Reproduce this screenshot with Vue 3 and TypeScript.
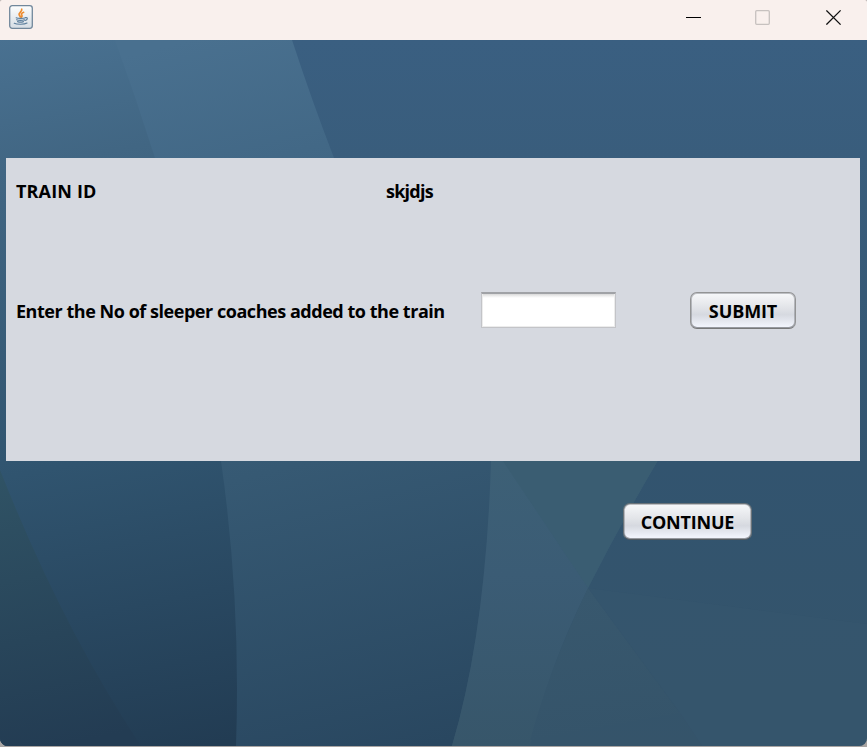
<script setup lang="ts">
import { ref } from 'vue'

const trainId = ref<string>('skjdjs')
const coaches = ref<string>('')
</script>

<template>
  <div class="window">
    <header class="titlebar">
      <svg class="java" width="24" height="24" viewBox="0 0 24 24">
        <defs>
          <linearGradient id="tile" x1="0" y1="0" x2="0" y2="1">
            <stop offset="0" stop-color="#fdfdfd" />
            <stop offset="1" stop-color="#d5dde4" />
          </linearGradient>
        </defs>
        <rect x=".7" y=".7" width="22.6" height="22.6" rx="2.5" fill="url(#tile)" stroke="#71879b" stroke-width="1.3" />
        <g fill="none" stroke-linecap="round">
          <path d="M12.7 4.2c1 2.3-3.5 3.3-2.6 5.6.3.8 1 1.300 1.300 2M14.600 7.300c-2.200 1-2.700 1.900-1.700 3 .5.700.2 1.200-.5 1.800" stroke="#ee8b2d" stroke-width="1.700" />
          <path d="M7.200 12.800c1.400.9 7.600.8 9.300-.1M7.700 14.700c1.500.8 6 .8 7.600 0M8.600 16.600c1.400.6 4.400.6 5.800 0M5.300 18.300c2.400 1.300 10.300 1.300 12.700-.2M16.400 12.600c2.700-.6 2.400 2.200-.3 2.900" stroke="#5d7f9d" stroke-width="1.200" />
        </g>
      </svg>
      <svg class="ctl" width="16" height="16" viewBox="0 0 16 16"><path d="M0 8.500h15" stroke="#000" /></svg>
      <svg class="ctl" width="16" height="16" viewBox="0 0 16 16"><rect x=".7" y="1.700" width="13.600" height="13.600" rx="1" fill="none" stroke="#c7c1bf" stroke-width="1.300" /></svg>
      <svg class="ctl" width="16" height="16" viewBox="0 0 16 16"><path d="M.4 1.400l14.200 14.200M14.600 1.400L.4 15.600" stroke="#111" stroke-width="1.300" /></svg>
    </header>

    <main class="client">
      <svg class="backdrop" width="867" height="706" viewBox="0 40 867 706" preserveAspectRatio="none">
        <defs>
          <linearGradient id="base" gradientUnits="userSpaceOnUse" x1="600" y1="40" x2="600" y2="746">
            <stop offset="0" stop-color="#3a5f81" />
            <stop offset=".17" stop-color="#395d7c" />
            <stop offset=".6" stop-color="#32546f" />
            <stop offset="1" stop-color="#35546a" />
          </linearGradient>
          <linearGradient id="mid" gradientUnits="userSpaceOnUse" x1="230" y1="30" x2="410" y2="750">
            <stop offset="0" stop-color="#49708f" />
            <stop offset=".18" stop-color="#426886" />
            <stop offset=".59" stop-color="#365973" />
            <stop offset="1" stop-color="#294760" />
          </linearGradient>
          <linearGradient id="left" gradientUnits="userSpaceOnUse" x1="40" y1="30" x2="180" y2="750">
            <stop offset="0" stop-color="#497191" />
            <stop offset=".18" stop-color="#416683" />
            <stop offset=".59" stop-color="#30546f" />
            <stop offset="1" stop-color="#223c53" />
          </linearGradient>
          <linearGradient id="corner" gradientUnits="userSpaceOnUse" x1="0" y1="470" x2="60" y2="746">
            <stop offset="0" stop-color="#305365" />
            <stop offset="1" stop-color="#233c53" />
          </linearGradient>
          <linearGradient id="blade" gradientUnits="userSpaceOnUse" x1="0" y1="461" x2="0" y2="746">
            <stop offset="0" stop-color="#3d6076" />
            <stop offset=".4" stop-color="#3b5c75" />
            <stop offset="1" stop-color="#37566a" />
          </linearGradient>
          <linearGradient id="facet" gradientUnits="userSpaceOnUse" x1="600" y1="588" x2="615" y2="735">
            <stop offset="0" stop-color="#38586e" />
            <stop offset="1" stop-color="#35546a" />
          </linearGradient>
        </defs>
        <rect x="0" y="40" width="867" height="706" fill="url(#base)" />
        <path d="M0 40H292Q312 101 334 158L491 461Q486 632 452 746H0Z" fill="url(#mid)" />
        <path d="M0 40H115Q136 98 155 158Q194 294 221 461Q241 600 236 746H0Z" fill="url(#left)" />
        <path d="M0 470Q62 627 141 746H0Z" fill="url(#corner)" />
        <path d="M491 450L664 450Q624 517 588 588Q547 671 530 746H452Q486 632 491 461Z" fill="url(#blade)" />
        <path d="M496 450H664Q624 517 588 588L503 461Z" fill="#3a5d72" />
        <path d="M588 588L680 713L530 740Q551 665 588 588Z" fill="url(#facet)" />
        <path d="M588 588L867 624V746H702L680 713Z" fill="#35556d" fill-opacity=".5" />
      </svg>

      <div class="content">
        <form class="panel" @submit.prevent>
          <div class="row first">
            <span class="label id">TRAIN ID</span>
            <span class="label value">{{ trainId }}</span>
          </div>
          <div class="row second">
            <label class="label prompt" for="coaches">Enter the No of sleeper coaches added to the train</label>
            <input id="coaches" v-model="coaches" class="field" type="text" />
            <button class="btn submit" type="submit"><span>SUBMIT</span></button>
          </div>
        </form>
        <button class="btn continue" type="button"><span>CONTINUE</span></button>
      </div>
    </main>
  </div>
</template>

<style>
body {
  margin: 0;
  background: #a9a5a3;
}
</style>

<style scoped>
.window {
  width: 867px;
  height: 746px;
  box-sizing: border-box;
  overflow: hidden;
  border-radius: 2px 2px 8px 8px;
  font-family: 'Open Sans', 'Noto Sans', sans-serif;
}
.titlebar {
  display: flex;
  box-sizing: border-box;
  height: 40px;
  padding: 5px 25px 0 9px;
  background: #f9f0ed;
}
.java {
  margin-right: auto;
}
.ctl {
  margin: 4px 0 0 54px;
}
.ctl + .ctl {
  margin-left: 53px;
}
.ctl + .ctl + .ctl {
  margin-left: 55px;
}
.client {
  display: grid;
  height: 706px;
}
.backdrop,
.content {
  grid-area: 1 / 1;
}
.content {
  z-index: 1;
  display: flex;
  flex-direction: column;
  padding: 118px 7px 0 6px;
}
.panel {
  box-sizing: border-box;
  height: 303px;
  padding: 14px 10px 0;
  background: #d6d9e0;
}
.row {
  display: flex;
  align-items: center;
  height: 37px;
}
.second {
  margin-top: 83px;
}
.label {
  color: #000;
  font-size: 18px;
  font-weight: 700;
  line-height: 24px;
  white-space: nowrap;
}
.id {
  width: 370px;
  letter-spacing: 0.15px;
}
.value {
  letter-spacing: -0.75px;
}
.prompt {
  width: 465px;
  letter-spacing: -0.46px;
}
.field {
  box-sizing: border-box;
  align-self: flex-start;
  width: 135px;
  height: 36px;
  padding: 4px 8px;
  border: 1px solid #c3c4c8;
  border-top: 2px solid #a0a2a6;
  border-radius: 0;
  background: linear-gradient(#d8d8d8, #eee 2px, #fff 4px);
  box-shadow: inset 1px 0 #ececec, inset -1px -1px #ececec;
  font: 600 18px 'Open Sans', sans-serif;
  outline: none;
}
.btn {
  box-sizing: border-box;
  height: 37px;
  padding: 0;
  border: 1px solid rgba(125, 125, 125, 0.75);
  border-bottom-color: rgba(95, 95, 95, 0.8);
  border-radius: 7px;
  background: linear-gradient(#f7f8fa, #e3e5e9 40%, #d6d9e0 62%, #f0f3fb 94%) padding-box;
  box-shadow: inset 0 0 0 1px rgba(120, 122, 128, 0.45), inset 0 -1px rgba(80, 82, 88, 0.4);
  color: #000;
  font: 700 18px/24px 'Open Sans', 'Noto Sans', sans-serif;
  letter-spacing: -0.1px;
}
.submit {
  width: 106px;
  margin-left: 74px;
}
.continue {
  width: 129px;
  margin: 42px 0 0 617px;
  letter-spacing: -0.2px;
}
</style>
